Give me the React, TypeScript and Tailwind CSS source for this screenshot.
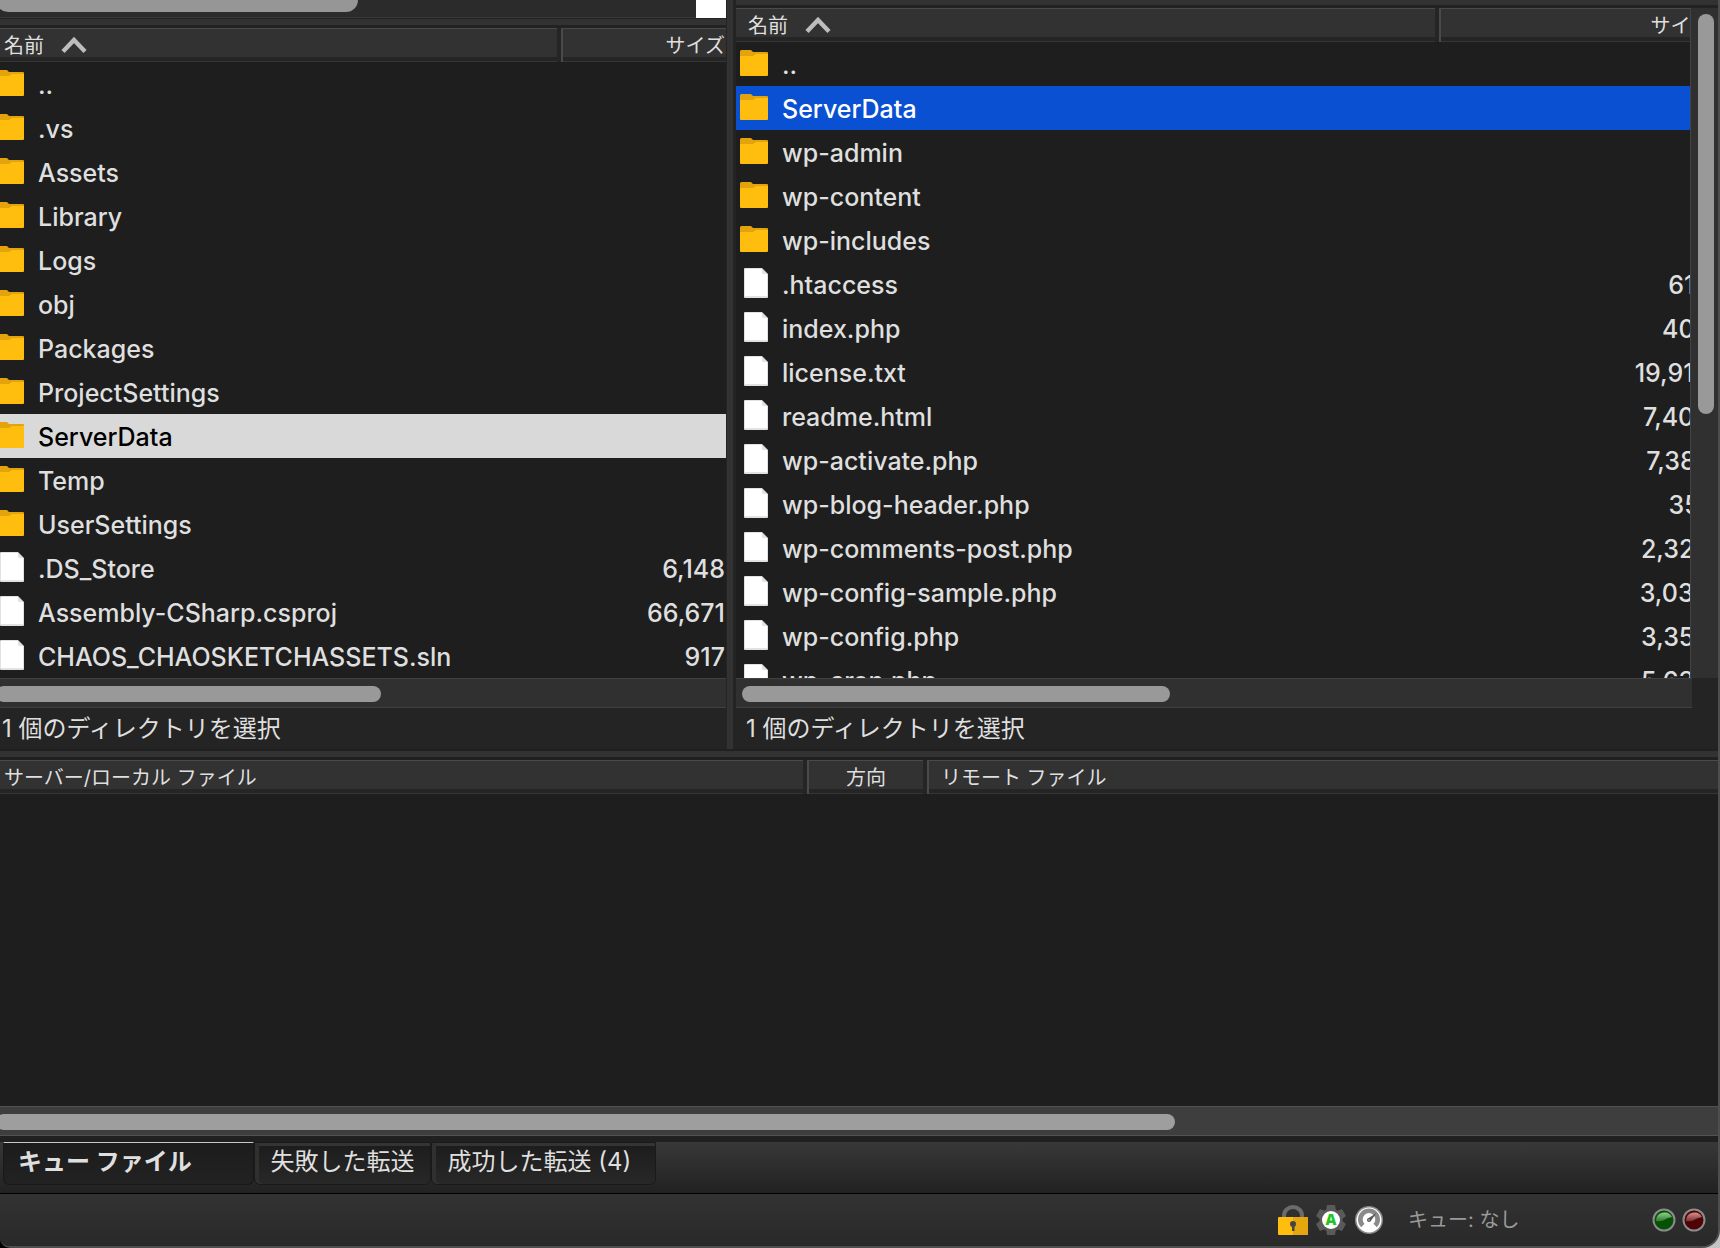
type Entry = {
  name: string;
  size?: string;
  selected?: boolean;
};

const localEntries: Entry[] = [
  { name: '..' },
  { name: '.vs' },
  { name: 'Assets' },
  { name: 'Library' },
  { name: 'Logs' },
  { name: 'obj' },
  { name: 'Packages' },
  { name: 'ProjectSettings' },
  { name: 'ServerData', selected: true },
  { name: 'Temp' },
  { name: 'UserSettings' },
  { name: '.DS_Store', size: '6,148' },
  { name: 'Assembly-CSharp.csproj', size: '66,671' },
  { name: 'CHAOS_CHAOSKETCHASSETS.sln', size: '917' },
];

const remoteEntries: Entry[] = [
  { name: '..' },
  { name: 'ServerData', selected: true },
  { name: 'wp-admin' },
  { name: 'wp-content' },
  { name: 'wp-includes' },
  { name: '.htaccess', size: '618' },
  { name: 'index.php', size: '405' },
  { name: 'license.txt', size: '19,914' },
  { name: 'readme.html', size: '7,409' },
  { name: 'wp-activate.php', size: '7,387' },
  { name: 'wp-blog-header.php', size: '351' },
  { name: 'wp-comments-post.php', size: '2,323' },
  { name: 'wp-config-sample.php', size: '3,034' },
  { name: 'wp-config.php', size: '3,358' },
  { name: 'wp-cron.php', size: '5,638' },
];

const headCell =
  'h-[34px] pt-0.5 pb-0 text-xl leading-6 font-normal bg-[#323232] shadow-[inset_0_1px_#4a4a4a,inset_0_-1px_#363636,inset_0_-5px_#252525]';

function FolderIcon() {
  return (
    <svg width="28" height="28" viewBox="0 0 28 28" className="block shrink-0" aria-hidden="true">
      <path d="M0 1.5Q0 0 1.5 0H11L13 2H27Q28 2 28 3V20H0Z" fill="#e3a30c" />
      <path d="M0 6H13L16 4H28V25Q28 26 27 26H1Q0 26 0 25Z" fill="#ffbe0d" />
    </svg>
  );
}

function FileIcon() {
  return (
    <svg width="24" height="32" viewBox="0 0 24 32" className="block shrink-0" aria-hidden="true">
      <path d="M1 0H18L24 6V29Q24 30 23 30H1Q0 30 0 29V1Q0 0 1 0Z" fill="#e2e2e2" />
      <path d="M1 1H18V5L19 6H23V28H1Z" fill="#fff" />
    </svg>
  );
}

function SortArrow() {
  return (
    <svg width="26" height="18" viewBox="0 0 26 18" className="block" aria-hidden="true">
      <path d="M2 14.5L13 3L24 14.5" fill="none" stroke="#bdbdbd" strokeWidth="4.4" />
    </svg>
  );
}

function FileTable({
  entries,
  label,
  selection,
  indent,
  nameWidth,
  iconPad,
  sizePad,
}: {
  entries: Entry[];
  label: string;
  selection: string;
  indent: string;
  nameWidth: string;
  iconPad: string;
  sizePad: string;
}) {
  return (
    <table className="w-full table-fixed border-separate border-spacing-0" aria-label={label}>
      <colgroup>
        <col className={nameWidth} />
        <col />
      </colgroup>
      <thead>
        <tr>
          <th scope="col" className={`${headCell} border-r-4 border-[#252525] px-0 text-left`}>
            <button type="button" className={`flex items-center gap-[17px] ${indent}`}>
              名前
              <SortArrow />
            </button>
          </th>
          <th scope="col" className={`${headCell} border-l-2 border-[#4a4a4a] px-0 text-right`}>
            <button type="button" className={sizePad}>
              サイズ
            </button>
          </th>
        </tr>
      </thead>
      <tbody className="font-medium">
        {entries.map((entry) => (
          <tr key={entry.name} className={entry.selected ? selection : undefined}>
            <td className="h-11 p-0">
              <div className={`flex items-center ${iconPad}`}>
                <span className="flex w-7 shrink-0 justify-end">
                  {entry.size ? <FileIcon /> : <FolderIcon />}
                </span>
                <span className="pt-0.5 pl-[14px] whitespace-nowrap">{entry.name}</span>
              </div>
            </td>
            <td className={`h-11 pt-0.5 pb-0 pl-0 text-right ${sizePad}`}>{entry.size}</td>
          </tr>
        ))}
      </tbody>
    </table>
  );
}

function HorizontalScrollbar({ thumb }: { thumb: string }) {
  return (
    <div className="h-[30px] shrink-0 overflow-hidden border-y border-[#414141] bg-[#303030] pt-[7px]">
      <div className={`h-4 rounded-full bg-[#999] ${thumb}`} />
    </div>
  );
}

function LockIcon() {
  return (
    <svg width="30" height="30" viewBox="0 0 30 30" aria-hidden="true">
      <path d="M6 13V10.500A9 8.500 0 0 1 24 10.500V13" fill="none" stroke="#6b6b6b" strokeWidth="4" />
      <rect y="12" width="30" height="18" rx="1" fill="#ffbe0d" />
      <path d="M15 12H29Q30 12 30 13V29Q30 30 29 30H15Z" fill="#e5a60f" />
      <circle cx="15" cy="19" r="3" fill="#444" />
      <path d="M14 19H16.500V26H14Z" fill="#444" />
    </svg>
  );
}

function GearIcon() {
  return (
    <svg width="30" height="30" viewBox="0 0 30 30" aria-hidden="true">
      <g fill="#5a5a5a">
        <circle cx="15" cy="15" r="11.500" />
        <path d="M11 0H19L20 6H10ZM11 30H19L20 24H10Z" />
        <path d="M11 0H19L20 6H10ZM11 30H19L20 24H10Z" transform="rotate(60 15 15)" />
        <path d="M11 0H19L20 6H10ZM11 30H19L20 24H10Z" transform="rotate(120 15 15)" />
      </g>
      <circle cx="15" cy="15" r="9" fill="#fff" />
      <text
        x="15"
        y="20"
        textAnchor="middle"
        fontFamily="Open Sans, sans-serif"
        fontSize="15"
        fontWeight="800"
        fill="#22c522"
      >
        A
      </text>
    </svg>
  );
}

function GaugeIcon() {
  return (
    <svg width="30" height="30" viewBox="0 0 30 30" aria-hidden="true">
      <circle cx="15" cy="15" r="14" fill="#8a8a8a" />
      <circle cx="15" cy="15" r="12.500" fill="#fff" />
      <path d="M7.200 22.200A11 11 0 1 1 22.800 22.200L19.500 18.800A6.300 6.300 0 1 0 10.500 18.800Z" fill="#8a8a8a" />
      <path d="M14 13.500L22.500 8L16.500 16.200Z" fill="#555" />
      <circle cx="15" cy="15" r="2" fill="#555" />
      <circle cx="15" cy="15" r="0.800" fill="#ccc" />
    </svg>
  );
}

function Led({ id, light, dark }: { id: string; light: string; dark: string }) {
  return (
    <svg width="24" height="24" viewBox="0 0 24 24" aria-hidden="true">
      <defs>
        <linearGradient id={id} x1="0" y1="0" x2="0" y2="1">
          <stop offset="0" stopColor={light} />
          <stop offset="1" stopColor={light} stopOpacity="0.300" />
        </linearGradient>
      </defs>
      <circle cx="12" cy="12" r="10.500" fill={dark} stroke="#8c8c8c" strokeWidth="2" />
      <path d="M4 13A8.500 8.500 0 0 1 20 9Q15 10 12 12T4 13Z" fill={`url(#${id})`} />
    </svg>
  );
}

export default function App() {
  return (
    <div className="bg-linear-to-r from-black to-[#c4c4c4]">
      <main className="flex min-h-screen flex-col overflow-hidden rounded-br-[18px] rounded-bl-[10px] border-r-2 border-b-2 border-[#4e4e4e] bg-[#242424] font-['Inter','Noto_Sans_CJK_JP',sans-serif] text-[#dfdfdf]">
        <div className="flex">
          {/* Local pane */}
          <section className="flex min-w-0 grow-[726] basis-0 flex-col" aria-label="ローカル">
            <div className="flex h-[18px] justify-between border-b border-[#3a3a3a] bg-[#2b2b2b]">
              <div className="-ml-1 h-3 w-[362px] rounded-b-full bg-[#969696]" />
              <div className="h-[18px] w-[30px] bg-white" />
            </div>
            <div className="h-[10px] border-t border-b-3 border-[#222] bg-[#323232]" />
            <div className="overflow-hidden bg-[#1e1e1e] text-[25px] leading-8">
              <FileTable
                entries={localEntries}
                label="ローカル ファイル"
                selection="bg-[#d9d9d9] text-black"
                indent="pl-1"
                nameWidth="w-[561px]"
                iconPad="-ml-1"
                sizePad="pr-px"
              />
            </div>
            <HorizontalScrollbar thumb="-ml-1 w-[385px]" />
            <p className="h-[41px] px-0.5 text-2xl leading-[42px]">1 個のディレクトリを選択</p>
          </section>

          <div className="w-[10px] shrink-0 border-r-3 border-l border-[#242424] bg-[#323232]" />

          {/* Remote pane */}
          <section className="flex min-w-0 grow-[982] basis-0 flex-col" aria-label="リモート">
            <div className="h-2 shrink-0 border-b-3 border-[#222] bg-[#323232]" />
            <div className="flex h-0 grow">
              <div className="min-w-0 grow overflow-hidden border-r border-[#444] bg-[#1e1e1e] text-[25px] leading-8">
                <div className="-mr-5">
                  <FileTable
                    entries={remoteEntries}
                    label="リモート ファイル"
                    selection="bg-[#0a50d2] text-white"
                    indent="pl-3"
                    nameWidth="w-[703px]"
                    iconPad="pl-1"
                    sizePad="pr-0"
                  />
                </div>
              </div>
              <div className="w-[27px] shrink-0 bg-[#303030] pt-[6px] pl-[7px]">
                <div className="h-[400px] w-4 rounded-full bg-[#999]" />
              </div>
            </div>
            <div className="mr-[26px]">
              <HorizontalScrollbar thumb="ml-[6px] w-[428px]" />
            </div>
            <p className="h-[41px] px-[10px] text-2xl leading-[42px]">1 個のディレクトリを選択</p>
          </section>
        </div>

        <div className="h-[11px] shrink-0 border-t-2 border-b-3 border-[#202020] bg-[#323232]" />

        {/* Transfer queue */}
        <div className="grow bg-[#1e1e1e]">
          <table className="w-full table-fixed border-separate border-spacing-0" aria-label="キュー ファイル">
            <colgroup>
              <col className="w-[807px]" />
              <col className="w-[120px]" />
              <col />
            </colgroup>
            <thead>
              <tr>
                <th scope="col" className={`${headCell} border-r-4 border-[#252525] pl-1 text-left`}>
                  サーバー/ローカル ファイル
                </th>
                <th scope="col" className={`${headCell} border-r-4 border-l-2 border-r-[#252525] border-l-[#4a4a4a] px-0`}>
                  方向
                </th>
                <th scope="col" className={`${headCell} border-l-2 border-[#4a4a4a] pl-3 text-left`}>
                  リモート ファイル
                </th>
              </tr>
            </thead>
          </table>
        </div>
        <div className="h-[30px] shrink-0 border-y border-[#525252] bg-[#3e3e3e] pt-[7px]">
          <div className="-ml-1 h-4 w-[1179px] rounded-full bg-[#9e9e9e]" />
        </div>

        {/* Queue tabs */}
        <div
          role="tablist"
          className="flex h-[58px] shrink-0 items-start border-t-6 border-b border-t-[#202020] border-b-black bg-linear-to-b from-[#383838] to-[#222] pl-[3px]"
        >
          <button
            type="button"
            role="tab"
            aria-selected="true"
            className="h-[43px] w-[251px] rounded-b-md border border-[#191919] border-t-[#c8c8c8] bg-linear-to-b from-[#1c1c1c] to-[#222] pb-1 pl-[14px] text-left text-2xl leading-8 font-bold"
          >
            キュー ファイル
          </button>
          <button
            type="button"
            role="tab"
            aria-selected="false"
            className="h-[43px] w-[177px] rounded-b-md border border-[#1a1a1a] bg-linear-to-b from-[#1c1c1c] to-[#282828] pb-1 text-2xl leading-8 shadow-[inset_4px_0_#303030,inset_0_3px_#343434]"
          >
            失敗した転送
          </button>
          <button
            type="button"
            role="tab"
            aria-selected="false"
            className="h-[43px] w-[225px] rounded-b-md border border-[#1a1a1a] bg-linear-to-b from-[#1c1c1c] to-[#282828] pr-2 pb-1 text-2xl leading-8 shadow-[inset_4px_0_#303030,inset_0_3px_#343434]"
          >
            成功した転送 (4)
          </button>
        </div>

        {/* Status bar */}
        <footer className="flex h-[52px] shrink-0 items-center justify-end bg-linear-to-b from-[#323232] to-[#292929] pr-3">
          <div className="flex gap-2">
            <LockIcon />
            <GearIcon />
            <GaugeIcon />
          </div>
          <span className="w-[268px] pl-6 text-xl leading-6 text-[#9a9a9a]">キュー: なし</span>
          <div className="flex gap-[6px]">
            <Led id="led-green" light="#8fd08f" dark="#055205" />
            <Led id="led-red" light="#d89090" dark="#4e0404" />
          </div>
        </footer>
      </main>
    </div>
  );
}
